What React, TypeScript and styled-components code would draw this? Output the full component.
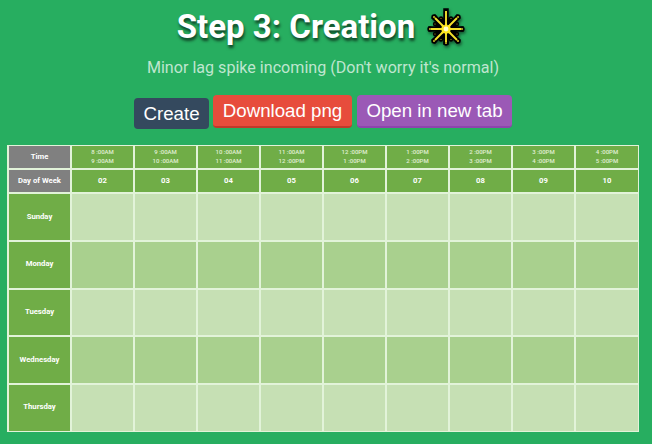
import React from "react";
import styled, { createGlobalStyle } from "styled-components";

const GlobalStyle = createGlobalStyle`
  * { box-sizing: border-box; }
  body {
    margin: 0;
    background: #27ae60;
    font-family: Roboto, "Liberation Sans", sans-serif;
    overflow: hidden;
  }
`;

const Page = styled.main`
  width: 652px;
  height: 444px;
  display: flex;
  flex-direction: column;
  background: #27ae60;
`;

const Title = styled.h1`
  margin: 0;
  padding: 0 9px 0 0;
  height: 54px;
  display: flex;
  justify-content: center;
  gap: 11px;
  color: #fff;
  font-size: 33px;
  line-height: 54px;
  font-weight: 700;
  white-space: nowrap;
  text-shadow: 1px 3px 3px rgba(0, 0, 0, 0.6);
`;

const Burst = styled.svg`
  width: 40px;
  height: 42px;
  margin-top: 7px;
  filter: drop-shadow(1px 2px 1.5px rgba(0, 0, 0, 0.5));
`;

const Note = styled.p`
  margin: 0;
  padding-right: 6px;
  height: 27px;
  line-height: 27px;
  font-size: 16.1px;
  text-align: center;
  white-space: nowrap;
  color: #bfe6cf;
`;

const Actions = styled.div`
  height: 64px;
  padding: 14px 0 0 134px;
  display: flex;
  align-items: flex-start;
`;

const Button = styled.button<{ $fill: string; $edge?: string; $width: number; $gap?: number }>`
  width: ${(p) => p.$width}px;
  height: ${(p) => (p.$edge ? 33 : 31)}px;
  margin: ${(p) => (p.$edge ? 0 : 3)}px ${(p) => p.$gap ?? 0}px 0 0;
  padding: 0;
  border: 0;
  border-bottom: ${(p) => (p.$edge ? `2px solid ${p.$edge}` : "0")};
  border-radius: 4px;
  background: ${(p) => p.$fill};
  color: #fff;
  font: 18.7px/31px "Liberation Sans", Arial, sans-serif;
  white-space: nowrap;
`;

const Timetable = styled.div`
  width: 632px;
  height: 287px;
  margin-left: 7px;
  padding: 1px 1px 1px 2px;
  display: grid;
  grid-template-columns: repeat(9, 61px) minmax(0, 1fr);
  grid-template-rows: 22px 22px 46px 45.6px 45.6px 45.7px minmax(0, 1fr);
  gap: 2px;
  background: #e2f3d9;
`;

const Cell = styled.div<{ $fill: string }>`
  display: flex;
  flex-direction: column;
  align-items: center;
  justify-content: center;
  padding-bottom: 2px;
  background: ${(p) => p.$fill};
  color: #fff;
  font-size: 7.7px;
  line-height: 9px;
  font-weight: 700;
  white-space: nowrap;
`;

const Hour = styled.span`
  font-size: 6px;
  line-height: 9px;
  font-weight: 500;
  color: #e0efd5;
`;

const GREEN = "#70ad47";
const GREY = "#808080";
const PALE = "#c6e0b4";
const MID = "#a9d08e";

const slots = [
  ["8 :00AM", "9 :00AM"],
  ["9 :00AM", "10 :00AM"],
  ["10 :00AM", "11 :00AM"],
  ["11 :00AM", "12 :00PM"],
  ["12 :00PM", "1 :00PM"],
  ["1 :00PM", "2 :00PM"],
  ["2 :00PM", "3 :00PM"],
  ["3 :00PM", "4 :00PM"],
  ["4 :00PM", "5 :00PM"],
];
const numbers = ["02", "03", "04", "05", "06", "07", "08", "09", "10"];
const days = ["Sunday", "Monday", "Tuesday", "Wednesday", "Thursday"];

const rays = "M20 22V4M20 22V35M20 22H5M20 22H35M20 22L9 11M20 22L31 11M20 22L9 33M20 22L31 33";
const dots = [
  [4, 22], [36, 22], [8, 10], [32, 10], [8, 34], [32, 34], [20, 36],
  [15, 11.5], [25, 11.5], [9, 17], [31, 17], [9, 27], [31, 27], [15, 32.5], [25, 32.5],
];

const BurstIcon = () => (
  <Burst viewBox="0 0 40 42" fill="none" aria-hidden="true">
    <path d={rays} stroke="#000" strokeWidth="5.5" strokeLinecap="square" />
    {dots.map(([x, y], i) => (
      <circle key={i} cx={x} cy={y} r={i < 7 ? 2.7 : 2.2} fill="#000" />
    ))}
    <circle cx="20" cy="22" r="11" fill="#000" />
    <path d={rays} stroke="#f2e02c" strokeWidth="1.9" />
    {dots.map(([x, y], i) => (
      <circle key={i} cx={x} cy={y} r={i < 7 ? 1 : 0.5} fill="#d8c92a" />
    ))}
    <path
      d="M20 16L21.8 18.5L25 17L24 20.2L26.5 22L24 23.8L25 27L21.8 26L20 28L18.2 26L15 27L16 23.8L13.5 22L16 20.2L15 17L18.2 18.5Z"
      fill="#ffe51f"
    />
    <circle cx="20" cy="22" r="2.4" fill="#fffbd0" />
  </Burst>
);

export default function App() {
  return (
    <Page>
      <GlobalStyle />
      <Title>
        <span>Step 3: Creation</span>
        <BurstIcon />
      </Title>
      <Note>Minor lag spike incoming (Don't worry it's normal)</Note>
      <Actions>
        <Button $fill="#34495e" $width={75} $gap={4}>Create</Button>
        <Button $fill="#e74c3c" $edge="#c0392b" $width={139} $gap={5}>Download png</Button>
        <Button $fill="#9b59b6" $edge="#8e44ad" $width={155}>Open in new tab</Button>
      </Actions>
      <Timetable>
        <Cell $fill={GREY}>Time</Cell>
        {slots.map(([from, to]) => (
          <Cell key={from} $fill={GREEN}>
            <Hour>{from}</Hour>
            <Hour>{to}</Hour>
          </Cell>
        ))}
        <Cell $fill={GREY}>Day of Week</Cell>
        {numbers.map((n) => (
          <Cell key={n} $fill={GREEN}>{n}</Cell>
        ))}
        {days.map((day, i) => (
          <React.Fragment key={day}>
            <Cell $fill={GREEN}>{day}</Cell>
            {numbers.map((n) => (
              <Cell key={n} $fill={i % 2 ? MID : PALE} />
            ))}
          </React.Fragment>
        ))}
      </Timetable>
    </Page>
  );
}
